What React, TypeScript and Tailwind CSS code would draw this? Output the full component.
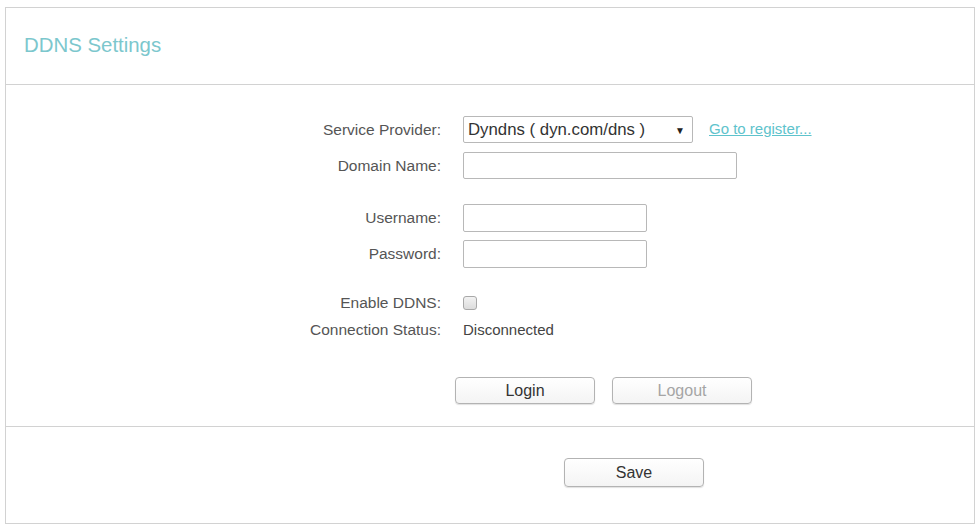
import { useState } from 'react'

// DDNS settings panel, router admin style. Label column is right-aligned
// and ends at a fixed x so the fields line up in one column.
const label = 'w-[435px] shrink-0 text-right text-[15.5px] text-[#555]'
const field = 'ml-[22px]'
const input =
  'h-[27px] border border-[#b8b8b8] rounded-[2px] bg-white px-1 text-[15px] text-[#333] outline-none'
const btn =
  'h-[27px] w-[140px] rounded-[4px] border border-[#b3b3b3] bg-gradient-to-b from-white to-[#f4f4f4] text-[16px] shadow-[0_1px_1px_rgba(0,0,0,0.12)]'

export default function App() {
  const [enabled, setEnabled] = useState(false)

  return (
    <div className="min-h-[526px] bg-white pt-[7px] pl-[5px] font-['Liberation_Sans',Arial,sans-serif]">
      <div className="w-[970px] border border-[#d2d2d2]">
        <div className="h-[77px] border-b border-[#d2d2d2] pl-[18px] flex items-center">
          <h1 className="text-[20.4px] text-[#7cc7cd] leading-none -mt-[1px]">DDNS Settings</h1>
        </div>

        <div className="pt-[31px] pb-[22px]">
          <div className="flex items-center">
            <div className={label}>Service Provider:</div>
            <div className={`${field} relative`}>
              <select className="h-[27px] w-[230px] appearance-none border border-[#b8b8b8] rounded-[2px] bg-white pl-[4px] text-[16.8px] text-[#333] outline-none">
                <option>Dyndns ( dyn.com/dns )</option>
                <option>NO-IP ( www.noip.com )</option>
              </select>
              <span className="pointer-events-none absolute right-[8px] top-[7px] text-[10px] text-[#222]">▼</span>
            </div>
            <a href="#" className="ml-[16px] text-[15px] text-[#5ec3cc] underline">
              Go to register...
            </a>
          </div>

          <div className="flex items-center mt-[9px]">
            <div className={label}>Domain Name:</div>
            <input className={`${field} ${input} w-[274px]`} />
          </div>

          <div className="flex items-center mt-[25px]">
            <div className={label}>Username:</div>
            <input className={`${field} ${input} w-[184px] h-[28px]`} />
          </div>

          <div className="flex items-center mt-[8px]">
            <div className={label}>Password:</div>
            <input type="password" className={`${field} ${input} w-[184px] h-[28px]`} />
          </div>

          <div className="flex items-center mt-[26px] h-[18px]">
            <div className={label}>Enable DDNS:</div>
            <div className={field}>
              <button
                type="button"
                onClick={() => setEnabled(!enabled)}
                className="block w-[14px] h-[14px] rounded-[3px] border border-[#a8a8a8] bg-gradient-to-b from-[#f2f2f2] to-[#dcdcdc]"
                aria-label="enable ddns"
              >
                {enabled && <span className="block text-[10px] leading-[12px] text-[#333]">✓</span>}
              </button>
            </div>
          </div>

          <div className="flex items-center mt-[9px] h-[18px]">
            <div className={label}>Connection Status:</div>
            <div className={`${field} text-[15px] text-[#444]`}>Disconnected</div>
          </div>

          <div className="flex mt-[38px] pl-[449px] gap-[17px]">
            <button type="button" className={`${btn} w-[139px] text-[#333]`}>
              Login
            </button>
            <button type="button" disabled className={`${btn} text-[#a5a5a5]`}>
              Logout
            </button>
          </div>
        </div>

        <div className="border-t border-[#d2d2d2] h-[97px] pt-[31px] pl-[558px]">
          <button type="button" className={`${btn} h-[29px] text-[#333]`}>
            Save
          </button>
        </div>
      </div>
    </div>
  )
}
